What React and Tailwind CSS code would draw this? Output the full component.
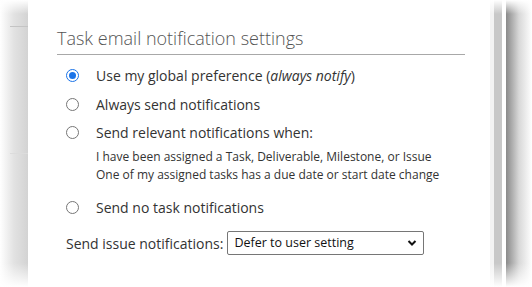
import React from "react";

function Radio({ checked }) {
  return (
    <span
      className={
        "flex h-[13px] w-[13px] shrink-0 items-center justify-center rounded-full border " +
        (checked ? "border-[#1a73e8] bg-white" : "border-[#767676] bg-white")
      }
    >
      {checked ? <span className="h-[7px] w-[7px] rounded-full bg-[#1a73e8]" /> : null}
    </span>
  );
}

function Row({ checked, children }) {
  return (
    <div className="flex items-center h-[20px]">
      <div className="w-[39px] pl-[9px] flex items-center">
        <Radio checked={checked} />
      </div>
      <div className="text-[14px] text-[#333]">{children}</div>
    </div>
  );
}

export default function App() {
  return (
    <div
      className="relative flex h-[287px] w-[532px] overflow-hidden bg-white"
      style={{ fontFamily: '"Open Sans", "Noto Sans", sans-serif' }}
    >
      {/* left strip */}
      <div className="relative w-[28px] shrink-0 bg-gradient-to-r from-white via-[#e2e2e2] to-[#d3d3d3]">
        <div className="absolute left-[10px] right-0 top-[26px] h-px bg-[#c4c4c4]" />
        <div className="absolute left-[10px] right-0 top-[153px] h-px bg-[#dcdcdc]" />
      </div>

      {/* main panel */}
      <div className="w-[462px] shrink-0 bg-white pl-[29px] pt-[27px]">
        <div className="w-[408px] border-b border-[#a8a8a8] pb-[5px]">
          <div className="text-[18px] font-light leading-[22px] text-[#555]">
            Task email notification settings
          </div>
        </div>
        <div className="mt-[10px] flex flex-col">
          <Row checked>
            Use my global preference (<i>always notify</i>)
          </Row>
          <div className="h-[9px]" />
          <Row>Always send notifications</Row>
          <div className="h-[8px]" />
          <Row>Send relevant notifications when:</Row>
          <div className="mt-[6px] pl-[39px] text-[12px] leading-[18px] text-[#333]">
            <div>I have been assigned a Task, Deliverable, Milestone, or Issue</div>
            <div>One of my assigned tasks has a due date or start date change</div>
          </div>
          <div className="h-[13px]" />
          <Row>Send no task notifications</Row>
          <div className="mt-[14px] flex items-center pl-[9px]">
            <span className="text-[14px] text-[#333]">Send issue notifications:</span>
            <div className="ml-[4px] flex h-[24px] w-[197px] items-center justify-between rounded-[2px] border border-[#767676] bg-white pl-[6px] pr-[6px]">
              <span className="text-[12.5px] text-[#111]">Defer to user setting</span>
              <svg width="10" height="8" viewBox="0 0 10 8">
                <path d="M1.5 2 L5 5.5 L8.5 2" stroke="#111" strokeWidth="2" fill="none" />
              </svg>
            </div>
          </div>
        </div>
      </div>

      {/* scrollbar area */}
      <div className="w-[4px] shrink-0 bg-[#f3f3f3]" />
      <div className="w-[8px] shrink-0 bg-[#c8c8c8]" />
      <div className="w-[4px] shrink-0 bg-white" />
      <div className="flex-1 bg-gradient-to-r from-[#8a8a8a] via-[#d8d8d8] to-white" />

      {/* top / bottom fades */}
      <div className="pointer-events-none absolute left-0 w-[28px] top-0 h-[14px] bg-gradient-to-b from-white to-transparent" />
      <div className="pointer-events-none absolute left-0 w-[28px] bottom-0 h-[24px] bg-gradient-to-t from-white to-transparent" />
      <div className="pointer-events-none absolute right-0 w-[42px] top-0 h-[14px] bg-gradient-to-b from-white to-transparent" />
      <div className="pointer-events-none absolute right-0 w-[42px] bottom-0 h-[24px] bg-gradient-to-t from-white to-transparent" />
    </div>
  );
}
